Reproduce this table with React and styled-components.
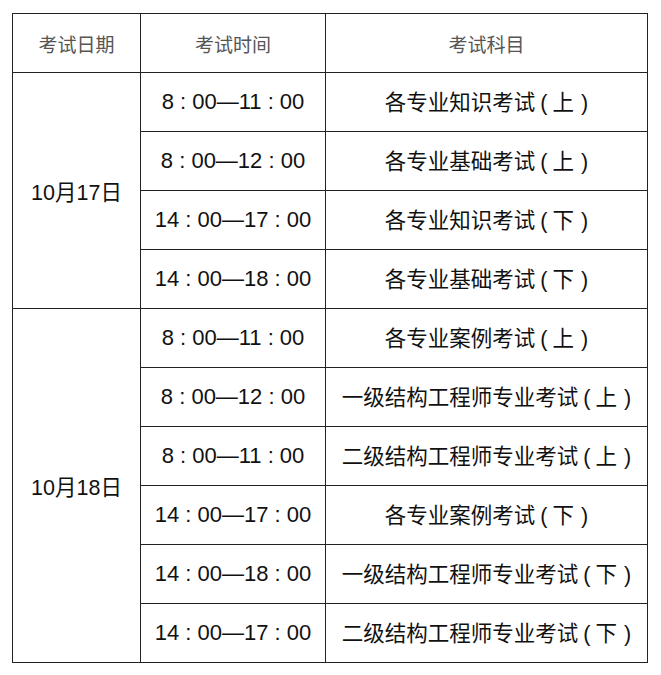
import React from "react";
import styled, { createGlobalStyle } from "styled-components";

const Global = createGlobalStyle`
  html, body { margin: 0; padding: 0; background: #fff; }
  body { font-family: "Liberation Sans", "Noto Sans CJK SC", sans-serif; }
`;

const Page = styled.div`
  padding: 13px 0 0 12px;
`;

const Table = styled.table`
  border-collapse: collapse;
  table-layout: fixed;
  width: 635px;
`;

const Col = styled.col`
  width: ${(p) => p.$w}px;
`;

const Row = styled.tr`
  height: 59px;
`;

const HeadCell = styled.th`
  border: 1px solid #222;
  padding: 0;
  font-weight: normal;
  font-size: 19px;
  color: #555;
  text-align: center;
  vertical-align: middle;
  font-family: "Noto Sans CJK SC", sans-serif;
`;

const DateCell = styled.td`
  border: 1px solid #222;
  padding: 0;
  font-size: 21.5px;
  color: #111;
  text-align: center;
  vertical-align: middle;
`;

const TimeCell = styled.td`
  border: 1px solid #222;
  padding: 0;
  font-size: 22px;
  color: #111;
  text-align: center;
  vertical-align: middle;
  white-space: pre;
`;

const SubjectCell = styled.td`
  border: 1px solid #222;
  padding: 0 0 3px;
  font-size: 21.5px;
  color: #111;
  text-align: center;
  vertical-align: middle;
  white-space: nowrap;
`;

const Bracket = styled.span`
  display: inline-block;
  margin-left: 5px;
  font-family: "Liberation Sans", sans-serif;
`;

const Part = styled.span`
  display: inline-block;
  margin: 0 7px 0 5px;
  font-family: "Noto Sans CJK SC", sans-serif;
`;

const groups = [
  {
    date: "10月17日",
    rows: [
      ["8 : 00—11 : 00", "各专业知识考试", "上"],
      ["8 : 00—12 : 00", "各专业基础考试", "上"],
      ["14 : 00—17 : 00", "各专业知识考试", "下"],
      ["14 : 00—18 : 00", "各专业基础考试", "下"],
    ],
  },
  {
    date: "10月18日",
    rows: [
      ["8 : 00—11 : 00", "各专业案例考试", "上"],
      ["8 : 00—12 : 00", "一级结构工程师专业考试", "上"],
      ["8 : 00—11 : 00", "二级结构工程师专业考试", "上"],
      ["14 : 00—17 : 00", "各专业案例考试", "下"],
      ["14 : 00—18 : 00", "一级结构工程师专业考试", "下"],
      ["14 : 00—17 : 00", "二级结构工程师专业考试", "下"],
    ],
  },
];

export default function App() {
  return (
    <Page>
      <Global />
      <Table>
        <colgroup>
          <Col $w={128} />
          <Col $w={185} />
          <Col $w={322} />
        </colgroup>
        <thead>
          <Row>
            <HeadCell>考试日期</HeadCell>
            <HeadCell>考试时间</HeadCell>
            <HeadCell>考试科目</HeadCell>
          </Row>
        </thead>
        <tbody>
          {groups.map((g) =>
            g.rows.map((r, i) => (
              <Row key={g.date + i}>
                {i === 0 && <DateCell rowSpan={g.rows.length}>{g.date}</DateCell>}
                <TimeCell>{r[0]}</TimeCell>
                <SubjectCell>
                  {r[1]}
                  <Bracket>
                    (<Part>{r[2]}</Part>)
                  </Bracket>
                </SubjectCell>
              </Row>
            ))
          )}
        </tbody>
      </Table>
    </Page>
  );
}
